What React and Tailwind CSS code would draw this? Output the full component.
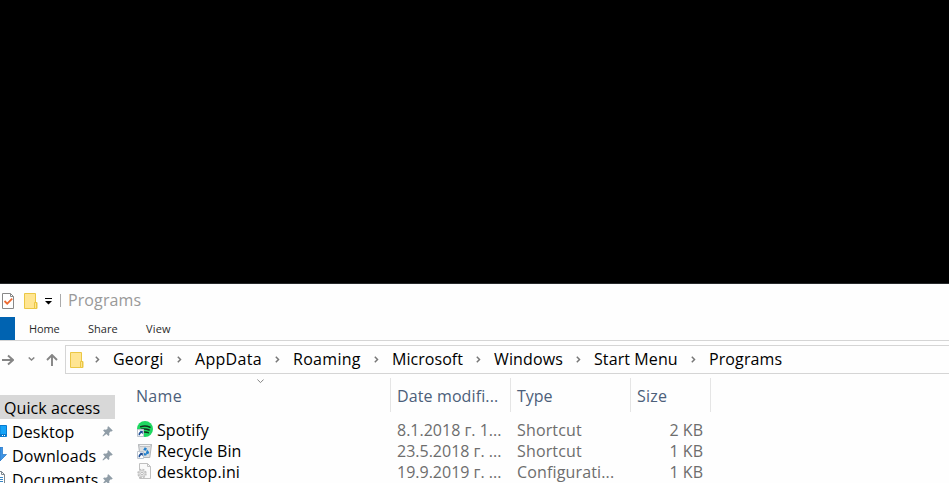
import React from "react";

const crumbs = [
  ["Georgi", "w-[82px]", "tracking-[0.15px]"],
  ["AppData", "w-[98px]", "tracking-[0.3px]"],
  ["Roaming", "w-[99px]", "tracking-[0.3px]"],
  ["Microsoft", "w-[102px]", "tracking-[0.05px]"],
  ["Windows", "w-[100px]", "tracking-[0.12px]"],
  ["Start Menu", "w-[115px]", "tracking-[0.1px]"],
  ["Programs", "w-[90px]", "tracking-[0.1px]"],
];

function Folder() {
  return (
    <svg className="h-4 w-[14px] shrink-0" viewBox="0 0 14 16">
      <path d="M.5.5h11v9h1.500v6H.5z" fill="#ffe592" stroke="#ebc744" />
      <path d="M10.500 9.500h2v6h-2z" fill="#ffe592" stroke="#ebc744" />
    </svg>
  );
}

function Chevron() {
  return (
    <svg className="h-[7px] w-[5px] shrink-0" viewBox="0 0 5 7">
      <path d="M.8.800 3.500 3.500.8 6.200" fill="none" stroke="#777" strokeWidth="1.500" />
    </svg>
  );
}

function Pin() {
  return (
    <svg className="h-[11px] w-[11px] shrink-0" viewBox="0 0 12 12">
      <path d="m7 .3 4.700 4.700-1.100.9-1-.2-1.800 2 .3 2-1.100 1.100-2.200-2.200-3.700 2.800-.6-.6L3.300 7.100 1.200 5l1.100-1.100 2.200.3 1.800-1.800-.4-1.200z" fill="#909da7" />
    </svg>
  );
}

function Shortcut() {
  return (
    <>
      <path d="M.5 8.500h6v7h-6z" fill="#fff" stroke="#bcc5cf" />
      <path d="M1.500 14.200c-.1-2.100.8-3.100 2-3.400L2.400 9.700h3.400v3.500l-1.100-1.100c-1 .2-1.600.8-1.700 2.100z" fill="#1f4f96" />
    </>
  );
}

function SpotifyIcon() {
  return (
    <svg className="relative -top-[2px] h-4 w-4" viewBox="0 0 16 16">
      <circle cx="8" cy="8" r="8" fill="#1ed760" />
      <path d="M3.700 5.700c3.200-1 6.500-.7 9.300.6M4.300 8.300c2.900-.8 5.500-.4 7.900.7M6.500 11c1.800-.3 3.300 0 4.800.6" fill="none" stroke="#12301d" strokeWidth="1.500" strokeLinecap="round" />
      <Shortcut />
    </svg>
  );
}

function BinIcon() {
  return (
    <svg className="relative -top-px h-4 w-4" viewBox="0 0 16 16">
      <path d="m1.500 1.500 1.700 13h9.600l1.700-13z" fill="#dde0e2" stroke="#b2b5b8" />
      <path d="M1.500 1.500h13L13 3.500H3z" fill="#f0f1f2" stroke="#b2b5b8" strokeWidth=".7" />
      <path d="m6.200 7 1.600-2.700L10 5.600 8.700 7.800zM10 6.500l2.200 2.700-1 2-2.400-1zM7 10l3 .8-.8 1.700H7z" fill="#2380cd" />
      <Shortcut />
    </svg>
  );
}

function IniIcon() {
  return (
    <svg className="relative -top-[2px] h-4 w-4" viewBox="0 0 16 16">
      <path d="M2.500.5h8l3 3v12h-11z" fill="#fafafa" stroke="#c0c0c0" />
      <path d="M10.500.5v3h3" fill="none" stroke="#c0c0c0" />
      <circle cx="5" cy="10.500" r="4" fill="#eee" stroke="#bebebe" strokeWidth="1.500" strokeDasharray="1.900 1.240" />
      <circle cx="5" cy="10.500" r="3" fill="#eee" stroke="#c2c2c2" strokeWidth=".8" />
      <circle cx="5" cy="10.500" r="1.300" fill="#fff" stroke="#aaa" strokeWidth=".8" />
    </svg>
  );
}

function DesktopIcon() {
  return (
    <svg className="h-4 w-[7px]" viewBox="0 0 7 16">
      <path d="M0 2.500h6.500v11H0z" fill="#16a4f8" stroke="#087bd0" />
      <path d="M0 11h6v2H0z" fill="#0878c9" />
      <path d="M2 12.500h1m1 0h1" stroke="#fff" />
    </svg>
  );
}

function DownloadIcon() {
  return (
    <svg className="h-4 w-[7px]" viewBox="0 0 7 16">
      <path d="M0 0h2.500v7.500h4L0 14z" fill="#3e94e4" stroke="#2374c4" strokeWidth=".7" />
    </svg>
  );
}

function DocumentIcon() {
  return (
    <svg className="h-4 w-[7px]" viewBox="0 0 7 16">
      <path d="M0 .5h1.500l3 3v12H0" fill="#fff" stroke="#7d878e" />
      <path d="M1.500.5v3h3" fill="none" stroke="#7d878e" />
      <path d="M0 6.500h3m-3 2h3m-3 2h3m-3 2h3" stroke="#3987c4" />
    </svg>
  );
}

const places = [
  ["Desktop", DesktopIcon],
  ["Downloads", DownloadIcon],
  ["Documents", DocumentIcon],
];

const files = [
  ["Spotify", "8.1.2018 г. 1...", "Shortcut", "2 KB", SpotifyIcon],
  ["Recycle Bin", "23.5.2018 г. ...", "Shortcut", "1 KB", BinIcon],
  ["desktop.ini", "19.9.2019 г. ...", "Configurati...", "1 KB", IniIcon],
];

export default function App() {
  return (
    <div className="flex h-[483px] w-[949px] flex-col overflow-hidden whitespace-nowrap bg-[#fefefe] font-['Open_Sans','Noto_Sans',sans-serif] text-[16px] leading-[21px] text-black">
      <div className="h-[284px] shrink-0 border-b border-[#26292b] bg-black" />
      <header className="flex h-[33px] shrink-0 items-center">
        <svg className="h-4 w-[14px] shrink-0" viewBox="0 0 14 16">
          <path d="M2.500.5h8l3 3v12h-11z" fill="#fff" stroke="#888" />
          <path d="M10.500.5v3h3" fill="none" stroke="#888" />
          <path d="m4.500 8 2.700 2.700 5-5" fill="none" stroke="#ed6b32" strokeWidth="1.800" />
        </svg>
        <div className="ml-[10px]"><Folder /></div>
        <svg className="relative top-px ml-[7px] h-[7px] w-[7px]" viewBox="0 0 7 7">
          <path d="M0 0h7v1H0zM0 3h7L3.500 6.500z" fill="#000" />
        </svg>
        <div className="ml-[8px] h-[13px] w-px bg-[#aaa]" />
        <div className="ml-[7px] tracking-[0.1px] text-[#999]">Programs</div>
      </header>
      <nav className="flex h-6 shrink-0 items-center border-b border-[#d5d5d5] text-[11px] text-[#2b2b2b]">
        <div className="h-full w-[15px] bg-[#0063b1]" />
        <div className="ml-[14px] w-[59px] tracking-[-0.1px]">Home</div>
        <div className="w-[58px]">Share</div>
        <div className="tracking-[0.2px]">View</div>
      </nav>
      <div className="mt-1 flex h-[29px] shrink-0 items-center">
        <div className="flex w-[65px] shrink-0 items-center">
          <svg className="ml-[2px] h-3 w-3" viewBox="0 0 12 12">
            <path d="M0 6h11M6 1.500 11 6 6 10.500" fill="none" stroke="#858585" strokeWidth="1.900" />
          </svg>
          <svg className="relative -top-px ml-[14px] h-1 w-[7px]" viewBox="0 0 7 4">
            <path d="m.7.500 2.800 2.500L6.300.5" fill="none" stroke="#858585" strokeWidth="1.500" />
          </svg>
          <svg className="ml-[11px] h-3 w-3" viewBox="0 0 12 12">
            <path d="M6 12V1M1 6l5-5 5 5" fill="none" stroke="#858585" strokeWidth="1.900" />
          </svg>
        </div>
        <div className="flex h-full flex-1 items-center border border-r-0 border-[#d5d5d5] pl-1">
          <Folder />
          <div className="ml-[11px] mr-[13px]"><Chevron /></div>
          {crumbs.map(([name, width, tracking], i) => (
            <div key={name} className={`flex shrink-0 items-center justify-between pr-[13px] ${width} ${tracking}`}>
              {name}
              {i < 6 && <Chevron />}
            </div>
          ))}
        </div>
      </div>
      <div className="flex min-h-0 flex-1">
        <aside className="w-[115px] shrink-0 pt-[21px]">
          <div className="flex h-6 items-center bg-[#d8d8d8] pl-1 pt-[2px] tracking-[0.1px]">Quick access</div>
          {places.map(([name, Icon]) => (
            <div key={name} className="flex h-6 items-center">
              <Icon />
              <span className="ml-[5px] w-[90px] pt-[2px] tracking-[0.1px]">{name}</span>
              <Pin />
            </div>
          ))}
        </aside>
        <main className="ml-[21px] w-[575px]">
          <div className="flex h-1 justify-center pr-[327px] pt-[5px]">
            <svg className="h-[5px] w-[7px] shrink-0" viewBox="0 0 7 5">
              <path d="m.4.500 3.100 3.100L6.600.5" fill="none" stroke="#858585" />
            </svg>
          </div>
          <div className="-mt-px flex h-[34px] items-center text-[#4c607a]">
            <div className="w-[254px] pt-[2px] tracking-[0.3px]">Name</div>
            <div className="flex h-full w-[120px] items-center border-l border-[#e5e5e5] pl-[6px] pt-[2px] tracking-[0.12px]">Date modifi...</div>
            <div className="flex h-full w-[120px] items-center border-l border-[#e5e5e5] pl-[6px] pt-[2px]">Type</div>
            <div className="flex h-full w-[81px] items-center border-x border-[#e5e5e5] pl-[6px] pt-[2px] tracking-[0.2px]">Size</div>
          </div>
          <div className="pt-2">
            {files.map(([name, date, type, size, Icon]) => (
              <div key={name} className="flex h-[21px] items-center text-[#6d6d6d]">
                <div className="flex w-[261px] items-center gap-1 pl-px tracking-[0.08px] text-black"><Icon />{name}</div>
                <div className="w-[120px]">{date}</div>
                <div className="w-[120px] tracking-[0.15px]">{type}</div>
                <div className="w-[66px] text-right">{size}</div>
              </div>
            ))}
          </div>
        </main>
      </div>
    </div>
  );
}
